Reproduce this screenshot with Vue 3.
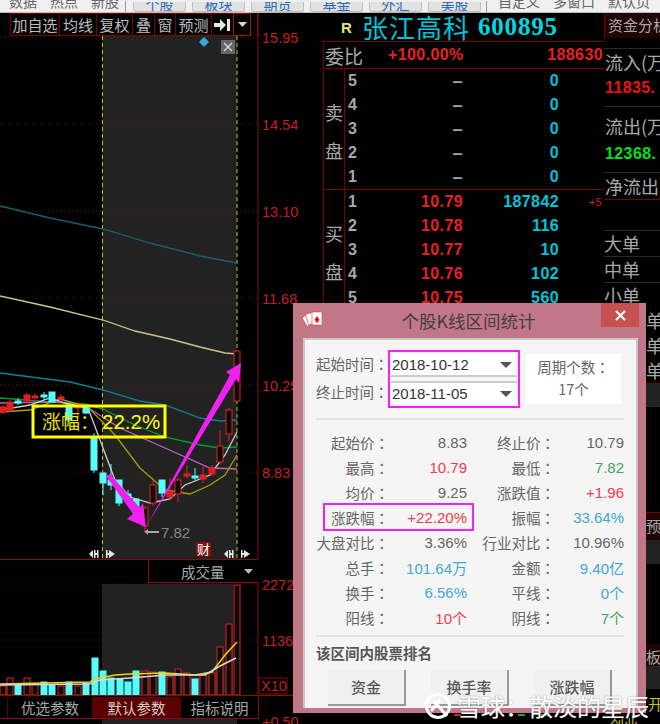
<script setup>
const topLeft = ['数据', '热点', '新股']
const topBtns = ['个股', '板块', '期货', '基金', '外汇', '美股']
const topRight = ['自定义', '多窗口', '默认页']
const tools = [
  { t: '加自选', w: 50 }, { t: '均线', w: 38 }, { t: '复权', w: 37 }, { t: '叠', w: 23 },
  { t: '窗', w: 22 }, { t: '预测', w: 37 }
]
const axis = [
  { y: 37, t: '15.95' }, { y: 124, t: '14.54' }, { y: 211, t: '13.10' },
  { y: 298, t: '11.68' }, { y: 385, t: '10.25' }, { y: 472, t: '8.83' }
]
// x, body top, body bottom, high, low, up
const candles = [
  [3, 407, 412, 405, 414, 1], [10, 402, 410, 400, 412, 1], [18, 401, 403, 398, 405, 0],
  [27, 395, 401, 393, 403, 1], [35, 396, 398, 393, 402, 1], [44, 395, 397, 392, 400, 0],
  [52, 392, 402, 392, 402, 0], [61, 397, 399, 394, 402, 1], [69, 405, 420, 403, 422, 0],
  [78, 405, 408, 402, 418, 1], [86, 408, 413, 406, 414, 0], [94, 437, 470, 433, 473, 0],
  [103, 473, 483, 473, 495, 0], [111, 480, 485, 464, 490, 0], [119, 480, 503, 480, 506, 0],
  [128, 494, 498, 490, 500, 0], [136, 499, 513, 499, 520, 0], [145, 508, 526, 506, 533, 1],
  [153, 485, 503, 480, 506, 1], [162, 480, 493, 480, 497, 0], [170, 492, 497, 478, 500, 1],
  [178, 480, 494, 478, 502, 1], [187, 474, 476, 465, 478, 1], [195, 476, 478, 468, 480, 0],
  [203, 475, 479, 466, 483, 1], [212, 468, 474, 465, 476, 1], [220, 446, 462, 430, 464, 1],
  [229, 410, 434, 408, 441, 1], [237, 351, 401, 350, 402, 1]
]
const curves = [
  { c: '#1c5f6c', p: '0,206 50,218 103,229 150,243 200,256 237,263' },
  { c: '#c9c48a', p: '0,296 50,307 103,320 135,331 170,339 200,347 225,353 237,354' },
  { c: '#10809a', p: '0,373 70,382 103,390 140,401 165,405 200,418 220,421 237,420' },
  { c: '#00a030', p: '0,398 50,402 85,404 103,409 135,425 165,437 200,445 220,448 237,447' },
  { c: '#c060c0', p: '0,403 60,402 90,409 120,428 165,448 210,468 237,469' },
  { c: '#a89e10', p: '0,412 30,410 60,399 88,407 115,435 140,468 165,490 190,494 210,485 225,475 237,455' },
  { c: '#d0d0d0', p: '0,410 30,405 50,398 65,403 88,408 100,440 115,480 130,497 150,503 170,499 185,485 210,475 225,455 237,432' }
]
const volBars = [
  [3, 686, 1], [10, 678, 1], [18, 685, 0], [27, 678, 1], [35, 684, 1], [44, 682, 0], [52, 685, 0],
  [61, 686, 1], [69, 682, 0], [78, 686, 1], [86, 683, 0], [95, 658, 0], [103, 671, 0], [111, 678, 0],
  [120, 679, 0], [128, 682, 0], [136, 671, 0], [145, 671, 1], [153, 672, 1], [162, 672, 0],
  [170, 677, 1], [178, 669, 1], [187, 673, 1], [195, 679, 0], [203, 675, 1], [212, 673, 1],
  [220, 647, 1], [229, 624, 1], [237, 585, 1]
]
const volBottom = 695
const sells = [5, 4, 3, 2, 1]
const buys = [
  { n: 1, p: '10.79', q: '187842', d: '+5' }, { n: 2, p: '10.78', q: '116' }, { n: 3, p: '10.77', q: '10' },
  { n: 4, p: '10.76', q: '102' }, { n: 5, p: '10.75', q: '560' }
]
const stats = [
  ['起始价', '8.83', '', '终止价', '10.79', ''],
  ['最高', '10.79', 'red', '最低', '7.82', 'green'],
  ['均价', '9.25', '', '涨跌值', '+1.96', 'red'],
  ['涨跌幅', '+22.20%', 'red', '振幅', '33.64%', 'blue'],
  ['大盘对比', '3.36%', '', '行业对比', '10.96%', ''],
  ['总手', '101.64万', 'blue', '金额', '9.40亿', 'blue'],
  ['换手', '6.56%', 'blue', '平线', '0个', 'blue'],
  ['阳线', '10个', 'red', '阴线', '7个', 'green']
]
</script>

<template>
  <div class="screen">
    <div class="topbar">
      <div class="top-left">
        <span v-for="t in topLeft" :key="t">{{ t }}</span>
      </div>
      <i class="top-sep"></i>
      <div class="top-btns">
        <span v-for="t in topBtns" :key="t" class="top-btn">{{ t }}</span>
      </div>
      <i class="top-sep"></i>
      <div class="top-right">
        <span v-for="t in topRight" :key="t">{{ t }}</span>
      </div>
    </div>

    <div class="body">
      <div class="chart-col">
        <div class="toolbar">
          <span v-for="b in tools" :key="b.t" class="tool" :style="{ width: b.w + 'px' }">{{ b.t }}</span>
          <span class="tool tool-icon" style="width: 23px">
            <svg width="17" height="12" viewBox="0 0 17 12">
              <path d="M0 4h6V0l6 6-6 6V8H0z" fill="#e8e8e8" />
              <rect x="13" y="0" width="3" height="12" fill="#e8e8e8" />
            </svg>
          </span>
          <span class="tool tool-last">
            <svg width="9" height="5" viewBox="0 0 9 5"><path d="M0 0h9L4.500 5z" fill="#d8d8d8" /></svg>
          </span>
        </div>

        <svg class="kline" width="322" height="523" viewBox="0 36 322 523">
          <rect x="102" y="36" width="135" height="523" fill="#222" />
          <line x1="258" y1="13" x2="258" y2="559" stroke="#8a0c0c" stroke-width="1" />
          <g v-for="a in axis" :key="a.t">
            <line x1="0" x2="258" :y1="a.y" :y2="a.y" stroke="#6a0f0f" stroke-dasharray="1 3" />
            <text x="262" :y="a.y + 6" class="axis-text">{{ a.t }}</text>
          </g>
          <line x1="102.500" y1="36" x2="102.500" y2="559" stroke="#c8bd10" stroke-dasharray="4 3" />
          <line x1="237" y1="36" x2="237" y2="559" stroke="#c8bd10" stroke-dasharray="4 3" />
          <polygon points="204,37 209,42 204,47 199,42" fill="#30a8e0" />
          <rect x="221" y="40" width="14" height="14" fill="#666" />
          <path d="M224 43l8 8M232 43l-8 8" stroke="#ddd" stroke-width="1.200" />
          <polyline v-for="l in curves" :key="l.c" :points="l.p" fill="none" :stroke="l.c" stroke-width="1.300" />
          <g v-for="k in candles" :key="k[0]">
            <line :x1="k[0]" :x2="k[0]" :y1="k[3]" :y2="k[4]" :stroke="k[5] ? '#e02020' : '#5ff'" />
            <rect
              :x="k[0] - 3"
              :y="k[1]"
              width="6"
              :height="k[2] - k[1]"
              :fill="k[5] ? (k[2] - k[1] > 8 ? '#0c0c0c' : '#e02020') : '#5ff'"
              :stroke="k[5] ? '#e02020' : '#5ff'"
            />
          </g>
          <polygon points="106,476 110,474 140,508 143,503 146,527 127,519 133,514" fill="#f020f0" />
          <polygon points="146,527 230,375 226,372 241,363 239,383 236,379" fill="#f020f0" />
          <rect x="33" y="406" width="132" height="31" fill="none" stroke="#ff0" stroke-width="3" />
          <text x="42" y="429" class="gain-text">涨幅：</text>
          <text x="102" y="429" class="gain-num">22.2%</text>
          <path d="M145 532h-1l4-3v2h11v2h-11v2z" fill="#a8a8a8" />
          <text x="161" y="538" class="low-text">7.82</text>
          <rect x="196" y="542" width="15" height="14" fill="#8a1010" />
          <text x="197" y="554" class="cai-text">财</text>
          <g fill="#e8e8e8">
            <path d="M89 554l4-4v8zM94 550h1.500v8H94zM97 550h1.500v8H97zM95 553h2v2h-2z" />
            <path d="M106 550h1.500v8H106zM109 550l6 4-6 4zM107 553h2v2h-2z" />
            <path d="M224 554l4-4v8zM229 550h1.500v8H229zM232 550h1.500v8H232zM230 553h2v2h-2z" />
            <path d="M241 550h1.500v8H241zM244 550l6 4-6 4zM242 553h2v2h-2z" />
          </g>
        </svg>

        <div class="vol-head">
          <span class="vol-tab">
            <span>成交量</span>
            <svg width="9" height="5" viewBox="0 0 9 5"><path d="M0 0h9L4.500 5z" fill="#b8b8b8" /></svg>
          </span>
        </div>

        <svg class="vol" width="322" height="114" viewBox="0 583 322 114">
          <rect x="102" y="584" width="131" height="112" fill="#222" />
          <line x1="258" y1="583" x2="258" y2="697" stroke="#8a0c0c" />
          <line x1="0" x2="258" y1="584" y2="584" stroke="#6a0f0f" stroke-dasharray="1 3" />
          <line x1="0" x2="258" y1="640" y2="640" stroke="#6a0f0f" stroke-dasharray="1 3" />
          <text x="262" y="590" class="axis-text">2272</text>
          <text x="262" y="646" class="axis-text">1136</text>
          <rect x="259" y="678" width="28" height="16" fill="none" stroke="#8a0c0c" />
          <text x="261" y="691" class="axis-text">X10</text>
          <rect
            v-for="v in volBars"
            :key="v[0]"
            :x="v[0] - 3"
            :y="v[1]"
            width="6"
            :height="volBottom - v[1]"
            :fill="v[2] ? '#0c0c0c' : '#5ff'"
            :stroke="v[2] ? '#e02020' : '#5ff'"
          />
          <polyline points="0,684 90,682 95,679 115,675 130,674 165,673 195,675 212,672 225,655 237,642" fill="none" stroke="#e8d810" stroke-width="1.500" />
          <polyline points="0,685 90,684 100,680 130,678 165,675 205,675 220,666 236,658" fill="none" stroke="#d8d8d8" stroke-width="1.500" />
          <line x1="0" x2="293" y1="695.500" y2="695.500" stroke="#8a0c0c" />
        </svg>

        <div class="tabs">
          <span class="tab">优选参数</span>
          <span class="tab tab-on">默认参数</span>
          <span class="tab tab-end">指标说明</span>
        </div>
        <div class="chart-foot">
          <span class="foot-band"></span>
          <span class="foot-num">+0.50</span>
        </div>
      </div>

      <div class="quote-col">
        <div class="stock-head">
          <span class="stock-r">R</span>
          <span class="stock-name">张江高科</span>
          <span class="stock-code">600895</span>
        </div>
        <div class="ratio">
          <span class="ratio-label">委比</span>
          <span class="ratio-pct">+100.00%</span>
          <span class="ratio-num">188630</span>
        </div>
        <div class="book">
          <div class="book-side">卖<br />盘</div>
          <div class="book-rows">
            <div v-for="n in sells" :key="n" class="row">
              <span class="idx">{{ n }}</span>
              <span class="price dash">–</span>
              <span class="qty">0</span>
              <span class="delta"></span>
            </div>
          </div>
        </div>
        <div class="book book-buy">
          <div class="book-side">买<br />盘</div>
          <div class="book-rows">
            <div v-for="b in buys" :key="b.n" class="row">
              <span class="idx">{{ b.n }}</span>
              <span class="price">{{ b.p }}</span>
              <span class="qty">{{ b.q }}</span>
              <span class="delta">{{ b.d }}</span>
            </div>
          </div>
        </div>
        <div class="quote-foot">
          <i class="tick tick-red"></i>
          <i class="tick tick-green"></i>
          <i class="tick tick-green tick-near"></i>
        </div>
      </div>

      <div class="side-col">
        <div class="side-head">资金分析</div>
        <div class="side-label side-first">流入(万</div>
        <div class="side-num num-red">11835.</div>
        <div class="side-label side-line">流出(万</div>
        <div class="side-num num-green">12368.</div>
        <div class="side-label side-net">净流出</div>
        <div class="side-gap"></div>
        <div class="side-order">大单</div>
        <div class="side-order">中单</div>
        <div class="side-order">小单</div>
        <div class="side-tail">单</div>
        <div class="side-tail">单</div>
        <div class="side-tail side-tail-end">单</div>
        <div class="side-band"></div>
        <div class="side-cut side-cut-a">预</div>
        <div class="side-band side-band-b"></div>
        <div class="side-cut side-cut-b">板</div>
        <div class="side-band side-band-c"></div>
        <div class="side-open">开</div>
        <div class="side-end">创业</div>
      </div>
    </div>

    <div class="dialog">
      <div class="dialog-title">
        <svg class="cards" width="20" height="16" viewBox="0 0 20 16">
          <g stroke="#c44" stroke-width="0.600">
            <rect x="1" y="5" width="8" height="10" rx="1" fill="#fff" transform="rotate(-30 5 10)" />
            <rect x="4" y="3" width="8" height="11" rx="1" fill="#fff" transform="rotate(-15 8 9)" />
            <rect x="9" y="2" width="10" height="13" rx="1" fill="#fff" />
          </g>
          <path d="M14 6l3 4.500h-2l.5 2h-3l.5-2h-2z" fill="#e01010" />
        </svg>
        <span class="dialog-name">个股K线区间统计</span>
        <span class="close">
          <svg width="11" height="11" viewBox="0 0 11 11">
            <path d="M1 1l9 9M10 1l-9 9" stroke="#fff" stroke-width="2.200" />
          </svg>
        </span>
      </div>

      <div class="panel">
        <div class="range">
          <div class="range-labels">
            <span>起始时间<span class="colon">：</span></span>
            <span>终止时间<span class="colon">：</span></span>
          </div>
          <div class="range-box">
            <div class="date-select">
              <span>2018-10-12</span>
              <i class="caret"></i>
            </div>
            <div class="date-select">
              <span>2018-11-05</span>
              <i class="caret"></i>
            </div>
          </div>
          <div class="period">
            <span>周期个数<span class="colon">：</span></span>
            <span>17个</span>
          </div>
        </div>

        <hr class="rule" />

        <div class="stats">
          <div v-for="s in stats" :key="s[0]" class="stat-row" :class="{ marked: s[0] === '涨跌幅' }">
            <span class="stat-label">{{ s[0] }}<span class="colon">：</span></span>
            <span class="stat-val" :class="s[2]">{{ s[1] }}</span>
            <span class="stat-label second">{{ s[3] }}<span class="colon">：</span></span>
            <span class="stat-val second-val" :class="s[5]">{{ s[4] }}</span>
          </div>
        </div>

        <hr class="rule rule-low" />
        <div class="rank-title">该区间内股票排名</div>
        <div class="rank-btns">
          <span class="rank-btn">资金</span>
          <span class="rank-btn">换手率</span>
          <span class="rank-btn">涨跌幅</span>
        </div>
      </div>
    </div>

    <div class="watermark">
      <svg width="28" height="28" viewBox="0 0 28 28">
        <circle cx="14" cy="14" r="11.500" fill="none" stroke="#fff" stroke-width="3" />
        <path d="M7 19L16 8M10 9l13 15" fill="none" stroke="#fff" stroke-width="3" />
      </svg>
      <span>雪球：散淡的星辰</span>
    </div>
  </div>
</template>

<style scoped>
.screen {
  position: relative;
  width: 660px;
  height: 724px;
  overflow: hidden;
  background: #000;
  color: #b8b8b8;
  font-family: "Noto Sans CJK SC", "Liberation Sans", sans-serif;
}

/* top strip, cut off by the crop */
.topbar {
  display: flex;
  align-items: flex-end;
  height: 12px;
  overflow: hidden;
  background: #f0f0f0;
  border-bottom: 1px solid #bbb;
  box-sizing: content-box;
  color: #666;
  font-size: 14px;
  line-height: 18px;
}
.top-left {
  display: flex;
  gap: 13px;
  width: 116px;
  padding-left: 9px;
  height: 12px;
  box-sizing: content-box;
}
.top-left span,
.top-right span {
  margin-top: -8px;
  height: 20px;
}
.top-sep {
  width: 1px;
  height: 11px;
  background: #999;
}
.top-btns {
  display: flex;
  gap: 6px;
  padding: 0 5px 0 7px;
}
.top-btn {
  width: 53px;
  height: 10px;
  margin-top: -1px;
  padding-bottom: 1px;
  overflow: hidden;
  box-sizing: border-box;
  border: 1px solid #c0c0c0;
  border-top: 0;
  border-radius: 0 0 3px 3px;
  background: #e2e2e2;
  color: #2a68b8;
  text-align: center;
  line-height: 4px;
}
.top-right {
  display: flex;
  gap: 13px;
  padding-left: 11px;
  height: 12px;
}

.body {
  display: flex;
  align-items: flex-start;
}

.chart-col {
  width: 322px;
  flex: none;
}
.toolbar {
  display: flex;
  height: 23px;
  margin-left: 10px;
  width: 248px;
  border-right: 1px solid #8a0c0c;
  box-sizing: border-box;
}
.tool {
  display: flex;
  align-items: center;
  justify-content: center;
  flex: none;
  height: 23px;
  box-sizing: border-box;
  border: 1px solid #7a0000;
  margin-right: -1px;
  font-size: 15px;
  line-height: 20px;
  color: #bdbdbd;
}
.tool-last {
  width: 18px;
  border-color: #a01010;
}
.kline {
  display: block;
  overflow: visible;
}
.axis-text {
  font-family: "Liberation Sans", sans-serif;
  font-size: 14.500px;
  fill: #c02020;
}
.gain-text {
  font-family: "Noto Sans CJK SC", sans-serif;
  font-size: 19px;
  fill: #e8e000;
}
.gain-num {
  font-family: "Liberation Sans", sans-serif;
  font-size: 20.500px;
  fill: #ffff00;
}
.low-text {
  font-family: "Liberation Sans", sans-serif;
  font-size: 15px;
  fill: #808a94;
}
.cai-text {
  font-family: "Noto Sans CJK SC", sans-serif;
  font-size: 13px;
  fill: #fff;
}

.vol-head {
  display: flex;
  height: 24px;
  width: 258px;
  border-top: 1px solid #8a0c0c;
  box-sizing: border-box;
  justify-content: flex-end;
}
.vol-tab {
  display: flex;
  align-items: center;
  justify-content: space-between;
  width: 110px;
  padding: 0 5px 0 32px;
  box-sizing: border-box;
  border-left: 1px solid #8a0c0c;
  border-bottom: 1px solid #8a0c0c;
  font-size: 14.500px;
  color: #a8a8a8;
}
.vol {
  display: block;
  overflow: visible;
}
.tabs {
  display: flex;
  width: 259px;
  height: 22px;
  padding-left: 7px;
  box-sizing: border-box;
  border-bottom: 1px solid #8a0c0c;
  border-right: 1px solid #8a0c0c;
}
.tab {
  width: 85px;
  border-left: 1px solid #5a0000;
  box-sizing: border-box;
  text-align: center;
  font-size: 14.500px;
  line-height: 21px;
  color: #a8a8a8;
}
.tab-on {
  width: 88px;
  background: #5a0000;
  color: #d8c8c8;
}
.tab-end {
  width: 78px;
}
.chart-foot {
  display: flex;
  align-items: flex-start;
  height: 6px;
  padding-left: 102px;
}
.foot-band {
  width: 135px;
  height: 6px;
  background: #222;
}
.foot-num {
  margin-left: 25px;
  margin-top: -6px;
  font-family: "Liberation Sans", sans-serif;
  font-size: 14.500px;
  line-height: 18px;
  color: #c02020;
}

.quote-col {
  width: 282px;
  flex: none;
}
.stock-head {
  display: flex;
  align-items: center;
  height: 28px;
  padding-left: 19px;
  white-space: nowrap;
}
.stock-r {
  width: 21px;
  font-family: "Liberation Sans", sans-serif;
  font-size: 15px;
  font-weight: 700;
  color: #e8e870;
}
.stock-name {
  font-size: 26px;
  line-height: 28px;
  letter-spacing: 1px;
  color: #00c4d8;
}
.stock-code {
  margin-left: 8px;
  font-family: "Liberation Serif", serif;
  font-size: 25px;
  font-weight: 700;
  letter-spacing: 0.800px;
  color: #00d8e0;
}
.ratio {
  display: flex;
  align-items: center;
  height: 28px;
  box-sizing: border-box;
  border: 1px solid #7a0000;
  border-right: 0;
  margin-left: 1px;
  font-family: "Liberation Sans", sans-serif;
  font-weight: 700;
  font-size: 16px;
  letter-spacing: 0.400px;
  color: #e82020;
}
.ratio-label {
  width: 63px;
  padding-left: 1px;
  font-family: "Noto Sans CJK SC", sans-serif;
  font-weight: 400;
  font-size: 19px;
  letter-spacing: 0;
  color: #aaa;
}
.ratio-pct {
  width: 78px;
}
.ratio-num {
  margin-left: auto;
  padding-right: 1px;
}
.book {
  display: flex;
  height: 120px;
  margin-left: 1px;
  border-left: 1px solid #7a0000;
  border-bottom: 1px solid #7a0000;
}
.book-buy {
  border-bottom: 0;
}
.book-side {
  width: 20px;
  flex: none;
  padding-top: 24px;
  border-right: 1px solid #7a0000;
  text-align: center;
  font-size: 18px;
  line-height: 38px;
  color: #a8a8a8;
}
.book-rows {
  flex: 1;
}
.row {
  display: flex;
  align-items: center;
  height: 24px;
  font-family: "Liberation Sans", sans-serif;
  font-weight: 700;
  font-size: 16px;
  letter-spacing: 0.400px;
}
.idx {
  width: 22px;
  padding-left: 3px;
  box-sizing: border-box;
  color: #a8a8a8;
}
.price {
  width: 96px;
  text-align: right;
  color: #e82020;
}
.dash {
  color: #a8a8a8;
  font-size: 18px;
}
.qty {
  width: 96px;
  text-align: right;
  color: #00c4d8;
}
.delta {
  width: 43px;
  text-align: right;
  font-weight: 400;
  font-size: 11px;
  color: #d02020;
}
.quote-foot {
  display: flex;
  margin: 404px 0 0 132px;
}
.tick {
  width: 7px;
  height: 2px;
}
.tick-red {
  background: #d02020;
}
.tick-green {
  margin-left: 57px;
  background: #10b020;
}
.tick-near {
  margin-left: 16px;
}

.side-col {
  flex: 1;
  min-width: 0;
  overflow: hidden;
  font-size: 17px;
  white-space: nowrap;
  color: #a8a8a8;
}
.side-head {
  height: 25px;
  padding-left: 3px;
  background: #1e0606;
  border-left: 1px solid #7a0000;
  font-size: 15px;
  line-height: 23px;
}
.side-label {
  height: 26px;
  font-size: 18px;
  line-height: 26px;
  padding-left: 1px;
}
.side-first {
  margin-top: 10px;
  border-top: 1px solid #2a2a2a;
}
.side-line {
  margin-top: 4px;
  padding-top: 6px;
  border-top: 1px solid #2a2a2a;
}
.side-num {
  height: 26px;
  margin-top: 1px;
  font-family: "Liberation Sans", sans-serif;
  font-weight: 700;
  font-size: 16px;
  letter-spacing: 0.400px;
  line-height: 24px;
  padding-left: 1px;
}
.num-green {
  margin-top: 3px;
  color: #00e020;
}
.num-red {
  color: #f01010;
}
.side-net {
  margin-top: 4px;
  border-top: 1px solid #2a2a2a;
}
.side-gap {
  height: 30px;
  border-top: 1px solid #7a0000;
}
.side-order {
  height: 25px;
  border-top: 1px solid #2a2a2a;
  font-size: 18px;
  line-height: 25px;
}
.side-tail {
  height: 25px;
  padding-left: 42px;
  font-size: 18px;
  line-height: 25px;
}
.side-tail-end {
  border-bottom: 1px solid #7a0000;
}
.side-band {
  height: 23px;
  background: #222;
}
.side-band-b {
  height: 24px;
}
.side-cut {
  padding-left: 42px;
  font-size: 15px;
  line-height: 25px;
  background: #1e0606;
}
.side-cut-a {
  margin-top: 105px;
  border-top: 1px solid #7a0000;
  height: 27px;
}
.side-cut-b {
  margin-top: 80px;
  height: 22px;
}
.side-open {
  margin-top: 5px;
  height: 20px;
  padding-left: 44px;
  font-size: 15px;
  line-height: 20px;
  color: #c8c020;
}
.side-end {
  padding-left: 6px;
  font-size: 14px;
  line-height: 20px;
  color: #c8c020;
}

.dialog {
  position: absolute;
  left: 293px;
  top: 303px;
  width: 353px;
  height: 410px;
  box-sizing: border-box;
  padding: 0 8px 5px 10px;
  display: flex;
  flex-direction: column;
  background: #c27788;
}
.dialog-title {
  position: relative;
  display: flex;
  align-items: center;
  justify-content: center;
  flex: none;
  height: 35px;
  font-size: 17px;
  color: #3f3f3f;
}
.dialog-name {
  padding-right: 4px;
  font-size: 17.500px;
}
.cards {
  position: absolute;
  left: 0;
  top: 7px;
}
.close {
  position: absolute;
  right: -1px;
  top: 0;
  display: flex;
  align-items: center;
  justify-content: center;
  width: 38px;
  height: 24px;
  background: #c75050;
}
.panel {
  flex: 1;
  padding: 10px 12px 0 11px;
  box-sizing: border-box;
  background: #f5f5f5;
  border: 2px solid #c8c8c8;
  border-bottom: 0;
  color: #666;
}
.colon {
  font-family: "Noto Sans CJK TC", sans-serif;
}
.range {
  display: flex;
}
.range-labels {
  display: flex;
  flex-direction: column;
  gap: 7px;
  width: 72px;
  padding-top: 3px;
  font-size: 14.500px;
  line-height: 21px;
  white-space: nowrap;
}
.range-box {
  display: flex;
  flex-direction: column;
  gap: 4px;
  width: 132px;
  height: 58px;
  box-sizing: border-box;
  padding: 2px 1px;
  border: 2px solid #f81ef8;
}
.date-select {
  display: flex;
  align-items: center;
  justify-content: space-between;
  height: 24px;
  padding: 0 5px 0 1px;
  background: #fff;
  border-bottom: 2px solid #ccc;
  box-sizing: border-box;
  font-family: "Liberation Sans", sans-serif;
  font-size: 15px;
  color: #333;
}
.date-select + .date-select {
  border-top: 2px solid #ccc;
  border-bottom: 0;
  height: 23px;
}
.caret {
  width: 0;
  height: 0;
  border-left: 6px solid transparent;
  border-right: 6px solid transparent;
  border-top: 6px solid #555;
}
.period {
  display: flex;
  flex-direction: column;
  align-items: center;
  gap: 1px;
  width: 95px;
  height: 50px;
  margin: 4px 0 0 6px;
  padding-top: 2px;
  box-sizing: border-box;
  background: #fff;
  font-size: 14.500px;
  line-height: 21px;
  white-space: nowrap;
}
.rule {
  width: 100%;
  height: 2px;
  margin: 10px 0 10px;
  border: 0;
  background: #e2e2e2;
}
.rule-low {
  margin: 5px 0 6px;
}
.stat-row {
  position: relative;
  display: flex;
  align-items: center;
  height: 25px;
  font-size: 14.500px;
  white-space: nowrap;
}
.stat-label {
  width: 73px;
  text-align: right;
}
.stat-val {
  width: 78px;
  text-align: right;
  font-family: "Liberation Sans", "Noto Sans CJK SC", sans-serif;
  font-size: 15px;
}
.second {
  width: 88px;
}
.second-val {
  width: 69px;
}
.marked::after {
  content: "";
  position: absolute;
  left: 7px;
  top: -2px;
  width: 151px;
  height: 28px;
  box-sizing: border-box;
  border: 2px solid #f81ef8;
}
.red {
  color: #f53a4a;
}
.green {
  color: #42a85c;
}
.blue {
  color: #42a8cc;
}
.rank-title {
  font-size: 14.500px;
  font-weight: 700;
  line-height: 20px;
  color: #555;
}
.rank-btns {
  display: flex;
  gap: 25px;
  margin: 7px 0 0 12px;
}
.rank-btn {
  width: 78px;
  height: 36px;
  box-sizing: border-box;
  background: #f0f0f0;
  border-right: 2px solid #999;
  border-bottom: 2px solid #999;
  text-align: center;
  font-size: 15px;
  font-weight: 500;
  line-height: 33px;
  color: #555;
}

.watermark {
  position: absolute;
  left: 424px;
  top: 692px;
  display: flex;
  align-items: center;
  gap: 5px;
  height: 28px;
  font-size: 24px;
  line-height: 28px;
  color: #fff;
  text-shadow: 0 0 2px rgba(90, 90, 90, 0.600);
  white-space: nowrap;
}
</style>
